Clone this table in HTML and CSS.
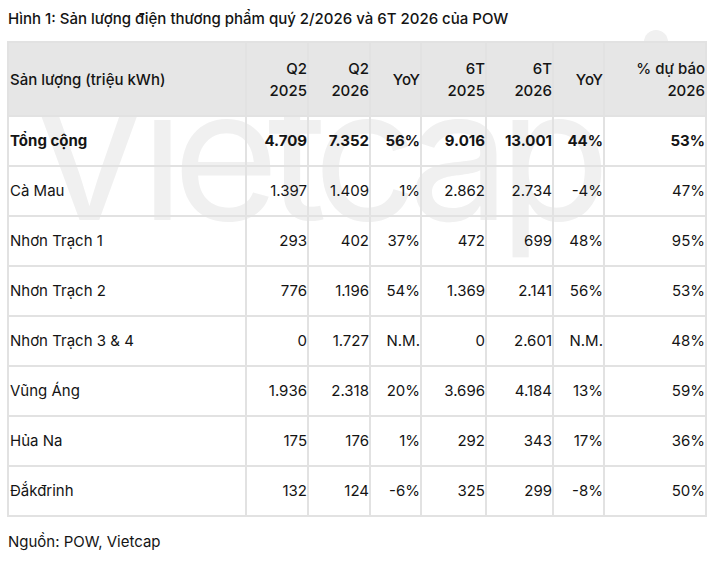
FILE: index.html
```html
<!DOCTYPE html>
<html lang="vi">
<head>
<meta charset="utf-8">
<title>Sản lượng điện thương phẩm POW</title>
<link rel="stylesheet" href="styles.css">
</head>
<body>
<div class="figure">
  <p class="title">Hình 1: Sản lượng điện thương phẩm quý 2/2026 và 6T 2026 của POW</p>
  <div class="table-wrap">
    <div class="watermark" aria-hidden="true">
      <span class="wm-text">Vietcap</span>
      <svg class="wm-mark" width="82" height="87" viewBox="0 0 82 87">
        <circle cx="43" cy="12" r="12" fill="#f0f0f0"/>
        <rect x="0" y="14" width="82" height="73" rx="16" fill="#f0f0f0"/>
      </svg>
    </div>
    <table class="data">
      <colgroup>
        <col class="c-name"><col class="c-q"><col class="c-q"><col class="c-yoy"><col class="c-h1"><col class="c-h2"><col class="c-yoy"><col class="c-fc">
      </colgroup>
      <thead>
        <tr>
          <th class="name">Sản lượng (triệu kWh)</th>
          <th>Q2<br>2025</th>
          <th>Q2<br>2026</th>
          <th>YoY</th>
          <th>6T<br>2025</th>
          <th>6T<br>2026</th>
          <th>YoY</th>
          <th>% dự báo<br>2026</th>
        </tr>
      </thead>
      <tbody>
        <tr class="total"><td class="name">Tổng cộng</td><td>4.709</td><td>7.352</td><td>56%</td><td>9.016</td><td>13.001</td><td>44%</td><td>53%</td></tr>
        <tr><td class="name">Cà Mau</td><td>1.397</td><td>1.409</td><td>1%</td><td>2.862</td><td>2.734</td><td>-4%</td><td>47%</td></tr>
        <tr><td class="name">Nhơn Trạch 1</td><td>293</td><td>402</td><td>37%</td><td>472</td><td>699</td><td>48%</td><td>95%</td></tr>
        <tr><td class="name">Nhơn Trạch 2</td><td>776</td><td>1.196</td><td>54%</td><td>1.369</td><td>2.141</td><td>56%</td><td>53%</td></tr>
        <tr><td class="name">Nhơn Trạch 3 &amp; 4</td><td>0</td><td>1.727</td><td>N.M.</td><td>0</td><td>2.601</td><td>N.M.</td><td>48%</td></tr>
        <tr><td class="name">Vũng Áng</td><td>1.936</td><td>2.318</td><td>20%</td><td>3.696</td><td>4.184</td><td>13%</td><td>59%</td></tr>
        <tr><td class="name">Hủa Na</td><td>175</td><td>176</td><td>1%</td><td>292</td><td>343</td><td>17%</td><td>36%</td></tr>
        <tr><td class="name">Đắkđrinh</td><td>132</td><td>124</td><td>-6%</td><td>325</td><td>299</td><td>-8%</td><td>50%</td></tr>
      </tbody>
    </table>
  </div>
  <p class="source">Nguồn: POW, Vietcap</p>
</div>
</body>
</html>
```

FILE: styles.css
```css
html, body {
  margin: 0;
  padding: 0;
  background: #ffffff;
}

body {
  padding: 8px;
  font-family: "Inter", "Noto Sans", "DejaVu Sans", sans-serif;
  font-size: 15px;
  line-height: 22px;
  color: #141414;
}

.figure {
  display: flex;
  flex-direction: column;
  width: 698px;
}

.title {
  margin: 0 0 11px 0;
  font-weight: 500;
  letter-spacing: 0;
}

.table-wrap {
  position: relative;
}

.watermark {
  position: absolute;
  inset: 0;
  z-index: 0;
  overflow: visible;
  pointer-events: none;
}

.wm-text {
  position: absolute;
  left: 18px;
  top: 21px;
  font-size: 183px;
  line-height: 183px;
  font-weight: 400;
  letter-spacing: -12px;
  color: #f0f0f0;
  white-space: nowrap;
}

.wm-mark {
  position: absolute;
  left: 605px;
  top: -11px;
}

.data {
  position: relative;
  z-index: 1;
  width: 698px;
  border-collapse: collapse;
  table-layout: fixed;
  margin-left: -1px;
}

.c-name { width: 238px; }
.c-q { width: 62px; }
.c-yoy { width: 51px; }
.c-h1 { width: 65px; }
.c-h2 { width: 67px; }
.c-fc { width: 102px; }

.data th,
.data td {
  border: 2px solid #e2e2e2;
  padding: 0;
  text-align: right;
  vertical-align: middle;
  white-space: nowrap;
}

.data th {
  background: #e6e6e6;
  font-weight: 500;
  height: 71px;
  padding-top: 1px;
}

.data td {
  height: 48px;
  font-weight: 400;
}

.data .name {
  text-align: left;
  padding-left: 1px;
}

.data tr.total td {
  font-weight: 700;
}

.source {
  margin: 14px 0 0 0;
  font-weight: 400;
}
```
